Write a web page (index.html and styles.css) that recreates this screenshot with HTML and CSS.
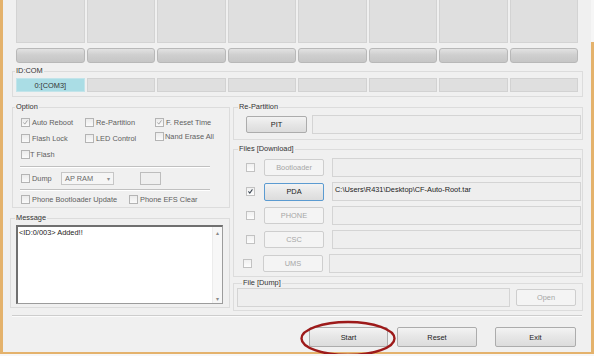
FILE: index.html
```html
<!DOCTYPE html>
<html lang="en">
<head>
  <meta charset="UTF-8" />
  <meta name="viewport" content="width=device-width, initial-scale=1.0" />
  <title>Odin3</title>
  <link rel="stylesheet" href="styles.css">
</head>
<body>
  <div class="window">
    <div class="main">
      <div class="slots">
        <div class="slot"></div><div class="slot"></div><div class="slot"></div><div class="slot"></div>
        <div class="slot"></div><div class="slot"></div><div class="slot"></div><div class="slot"></div>
      </div>
      <div class="bars">
        <div class="bar"></div><div class="bar"></div><div class="bar"></div><div class="bar"></div>
        <div class="bar"></div><div class="bar"></div><div class="bar"></div><div class="bar"></div>
      </div>
      <fieldset class="box idcom">
        <legend>ID:COM</legend>
        <div class="ports">
          <div class="port active">0:[COM3]</div>
          <div class="port"></div><div class="port"></div><div class="port"></div>
          <div class="port"></div><div class="port"></div><div class="port"></div><div class="port"></div>
        </div>
      </fieldset>

      <div class="middle">
        <div class="col">
          <fieldset class="box option">
            <legend>Option</legend>
            <div class="opt-body">
              <div class="opt-grid">
                <span class="chk"><span class="cb"><svg viewBox="0 0 9 9"><path d="M1.8 4.4 L3.6 6.6 L7 1.8" /></svg></span>Auto Reboot</span>
                <span class="chk"><span class="cb"></span>Re-Partition</span>
                <span class="chk"><span class="cb"><svg viewBox="0 0 9 9"><path d="M1.8 4.4 L3.6 6.6 L7 1.8" /></svg></span>F. Reset Time</span>
                <span class="chk"><span class="cb"></span>Flash Lock</span>
                <span class="chk"><span class="cb"></span>LED Control</span>
                <span class="chk nand"><span class="cb"></span>Nand Erase All</span>
                <span class="chk tight"><span class="cb"></span>T Flash</span>
              </div>
              <div class="sep"></div>
              <div class="opt-row">
                <span class="chk dump-chk"><span class="cb"></span>Dump</span>
                <span class="combo">AP RAM<span class="arrow">&#9662;</span></span>
                <span class="mini-box"></span>
              </div>
              <div class="sep sep2"></div>
              <div class="opt-row">
                <span class="chk boot-chk"><span class="cb"></span>Phone Bootloader Update</span>
                <span class="chk"><span class="cb"></span>Phone EFS Clear</span>
              </div>
            </div>
          </fieldset>

          <fieldset class="box message">
            <legend>Message</legend>
            <div class="log">
              <div class="log-text">&lt;ID:0/003&gt; Added!!</div>
              <div class="scroll"><span>&#9652;</span><span>&#9662;</span></div>
            </div>
          </fieldset>
        </div>

        <div class="col">
          <fieldset class="box repart">
            <legend>Re-Partition</legend>
            <div class="file-row">
              <button class="btn pit">PIT</button>
              <div class="field"></div>
            </div>
          </fieldset>

          <fieldset class="box files">
            <legend>Files [Download]</legend>
            <div class="rows">
              <div class="file-row"><span class="cb"></span><button class="btn off">Bootloader</button><div class="field"></div></div>
              <div class="file-row"><span class="cb on"><svg viewBox="0 0 9 9"><path d="M1.8 4.4 L3.6 6.6 L7 1.8" /></svg></span><button class="btn def">PDA</button><div class="field">C:\Users\R431\Desktop\CF-Auto-Root.tar</div></div>
              <div class="file-row"><span class="cb"></span><button class="btn off">PHONE</button><div class="field"></div></div>
              <div class="file-row"><span class="cb"></span><button class="btn off">CSC</button><div class="field"></div></div>
              <div class="file-row ums"><span class="cb"></span><button class="btn off">UMS</button><div class="field"></div></div>
            </div>
          </fieldset>

          <fieldset class="box dump">
            <legend>File [Dump]</legend>
            <div class="file-row">
              <div class="field"></div>
              <button class="btn off open">Open</button>
            </div>
          </fieldset>
        </div>
      </div>

      <div class="hsep"></div>

      <div class="actions">
        <div class="start-wrap">
          <button class="btn big">Start</button>
          <svg class="mark" viewBox="0 0 96 36"><ellipse cx="48" cy="18.5" rx="46.5" ry="16.5" /></svg>
        </div>
        <button class="btn big reset">Reset</button>
        <button class="btn big exit">Exit</button>
      </div>
    </div>
    <div class="edge-r"></div>
  </div>
</body>
</html>
```

FILE: styles.css
```css
* { box-sizing: border-box; }
body { margin: 0; background: #f7f7f7; font-family: 'Liberation Sans', Arial, sans-serif; font-size: 7.4px; color: #333; }
.window { display: flex; width: 594px; height: 354px; border-left: 3px solid #e4b26c; border-bottom: 2px solid #e4b26c; background: #f0f0f0; }
.main { flex: 1; padding: 0 8px 0 7px; }
.edge-r { width: 3px; background: linear-gradient(#f6f6f6 42px, #e4b26c 42px); }

/* top device slots */
.slots, .bars, .ports { display: grid; grid-template-columns: repeat(8, 1fr); column-gap: 2px; }
.slots, .bars { margin: 0 5px 0 6px; }
.slot { height: 43px; background: #dfdfdf; border: 1px solid #d3d3d3; border-top: 0; }
.bars { margin-top: 5px; }
.bar { height: 15px; border: 1px solid #b8b8b8; border-radius: 3px; background: linear-gradient(#e2e2e2, #cfcfcf 45%, #c6c6c6); }

/* group boxes */
.box { border: 1px solid #dcdcdc; margin: 0; padding: 0; min-width: 0; }
.box legend { padding: 0 1px; margin-left: 2px; line-height: 10px; color: #333; }
.idcom { margin: 3px 0 0 2px; }
.ports { margin: 2px 4px 4px 3px; }
.port { height: 14px; line-height: 14px; text-align: center; background: #dfdfdf; border: 1px solid #d2d2d2; color: #333; }
.port.active { background: #aadde5; border-color: #c2e4ea; }

.middle { display: grid; grid-template-columns: 220px 350px; column-gap: 3px; margin-top: 5px; align-items: start; }

/* option */
.option { margin-left: 2px; }
.opt-body { padding: 2px 0 0 8px; }
.opt-grid { display: grid; grid-template-columns: 64px 70px auto; grid-auto-rows: 16px; }
.chk { display: flex; align-items: center; gap: 2px; height: 16px; color: #5e5e5e; white-space: nowrap; }
.chk.tight { gap: 0; }
.chk.nand { gap: 1px; margin-top: -2px; }
.cb { width: 9px; height: 9px; flex: none; border: 1px solid #b4b4b4; background: linear-gradient(#ebebeb, #fafafa); display: flex; }
.cb svg { width: 7px; height: 7px; }
.cb path { fill: none; stroke: #9a9a9a; stroke-width: 1.1; }
.cb.on path { stroke: #3b4652; stroke-width: 1.3; }
.sep { width: 190px; margin: 4px 0 0 -1px; border-top: 1px solid #c0c0c0; border-bottom: 1px solid #fff; }
.sep2 { margin-top: 3px; }
.opt-row { display: flex; align-items: center; height: 16px; margin-top: 2px; }
.sep2 + .opt-row { margin-top: 0; }
.dump-chk { width: 40px; }
.boot-chk { width: 108px; }
.combo { width: 53px; height: 13px; border: 1px solid #c6c6c6; background: #f5f5f5; color: #6a6a6a; display: flex; align-items: center; justify-content: space-between; padding: 0 3px 0 3px; }
.combo .arrow { font-size: 6px; color: #8c8c8c; }
.mini-box { width: 21px; height: 13px; margin-left: 26px; border: 1px solid #bdbdbd; background: #efefef; }

/* message */
.message { margin-top: 5px; }
.message legend { margin-left: 4px; }
.log { display: flex; height: 79px; margin: 2px 6px 3px 5px; background: #fff; border: 1px solid #9c9c9c; border-left: 2px solid #707070; border-top: 2px solid #707070; }
.log-text { flex: 1; padding: 1px 0 0 1px; color: #222; }
.scroll { width: 10px; display: flex; flex-direction: column; justify-content: space-between; align-items: center; background: #f7f7f7; border-left: 1px solid #ececec; font-size: 6px; color: #8a8a8a; padding: 2px 0 1px; }

/* right column */
.repart legend, .files legend { margin-left: 4px; }
.dump legend { margin-left: 8px; }
.file-row { display: flex; align-items: center; height: 19px; }
.repart .file-row { margin: 3px 1px 5px 12px; }
.files { margin-top: 4px; }
.rows { display: flex; flex-direction: column; gap: 5px; margin: 4px 1px 3px 12px; }
.rows .cb { margin-right: 9px; border-color: #c2c2c2; background: linear-gradient(#f0f0f0, #fdfdfd); }
.rows .ums { margin-left: -3px; }
.rows .ums .cb { margin-right: 11px; }
.rows .ums .field { margin-left: 6px; }
.dump { margin-top: 1px; }
.dump .file-row { margin: 0 6px 3px 3px; gap: 6px; }
.field { flex: 1; height: 19px; border: 1px solid #d4d4d4; background: #eeeeee; color: #222; padding: 2px 0 0 2px; white-space: nowrap; }
.repart .field { margin-left: 5px; }
.rows .field { margin-left: 8px; }

.btn { font: inherit; width: 60px; height: 17px; padding: 0; color: #222; border: 1px solid #acacac; border-radius: 2px; background: linear-gradient(#f3f3f3, #e6e6e6 50%, #dcdcdc); }
.btn.pit { width: 61px; }
.btn.off { color: #a6a6a6; border-color: #cecece; background: #f4f4f4; }
.btn.def { border-color: #5b9bd1; height: 18px; }
.btn.open { flex: none; }

/* bottom */
.hsep { margin: 4px 1px 0 2px; border-top: 1px solid #cdcdcd; border-bottom: 1px solid #fbfbfb; }
.actions { display: flex; justify-content: flex-end; margin: 10px 7px 0 0; }
.btn.big { height: 20px; width: 80px; }
.start-wrap { position: relative; margin-right: 9px; }
.start-wrap .btn { width: 79px; display: block; }
.reset { margin-right: 18px; }
.btn.exit { width: 81px; }
.mark { position: absolute; left: -9px; top: -7px; width: 96px; height: 36px; overflow: visible; }
.mark ellipse { fill: none; stroke: #9d1a1a; stroke-width: 2.4; }
```
